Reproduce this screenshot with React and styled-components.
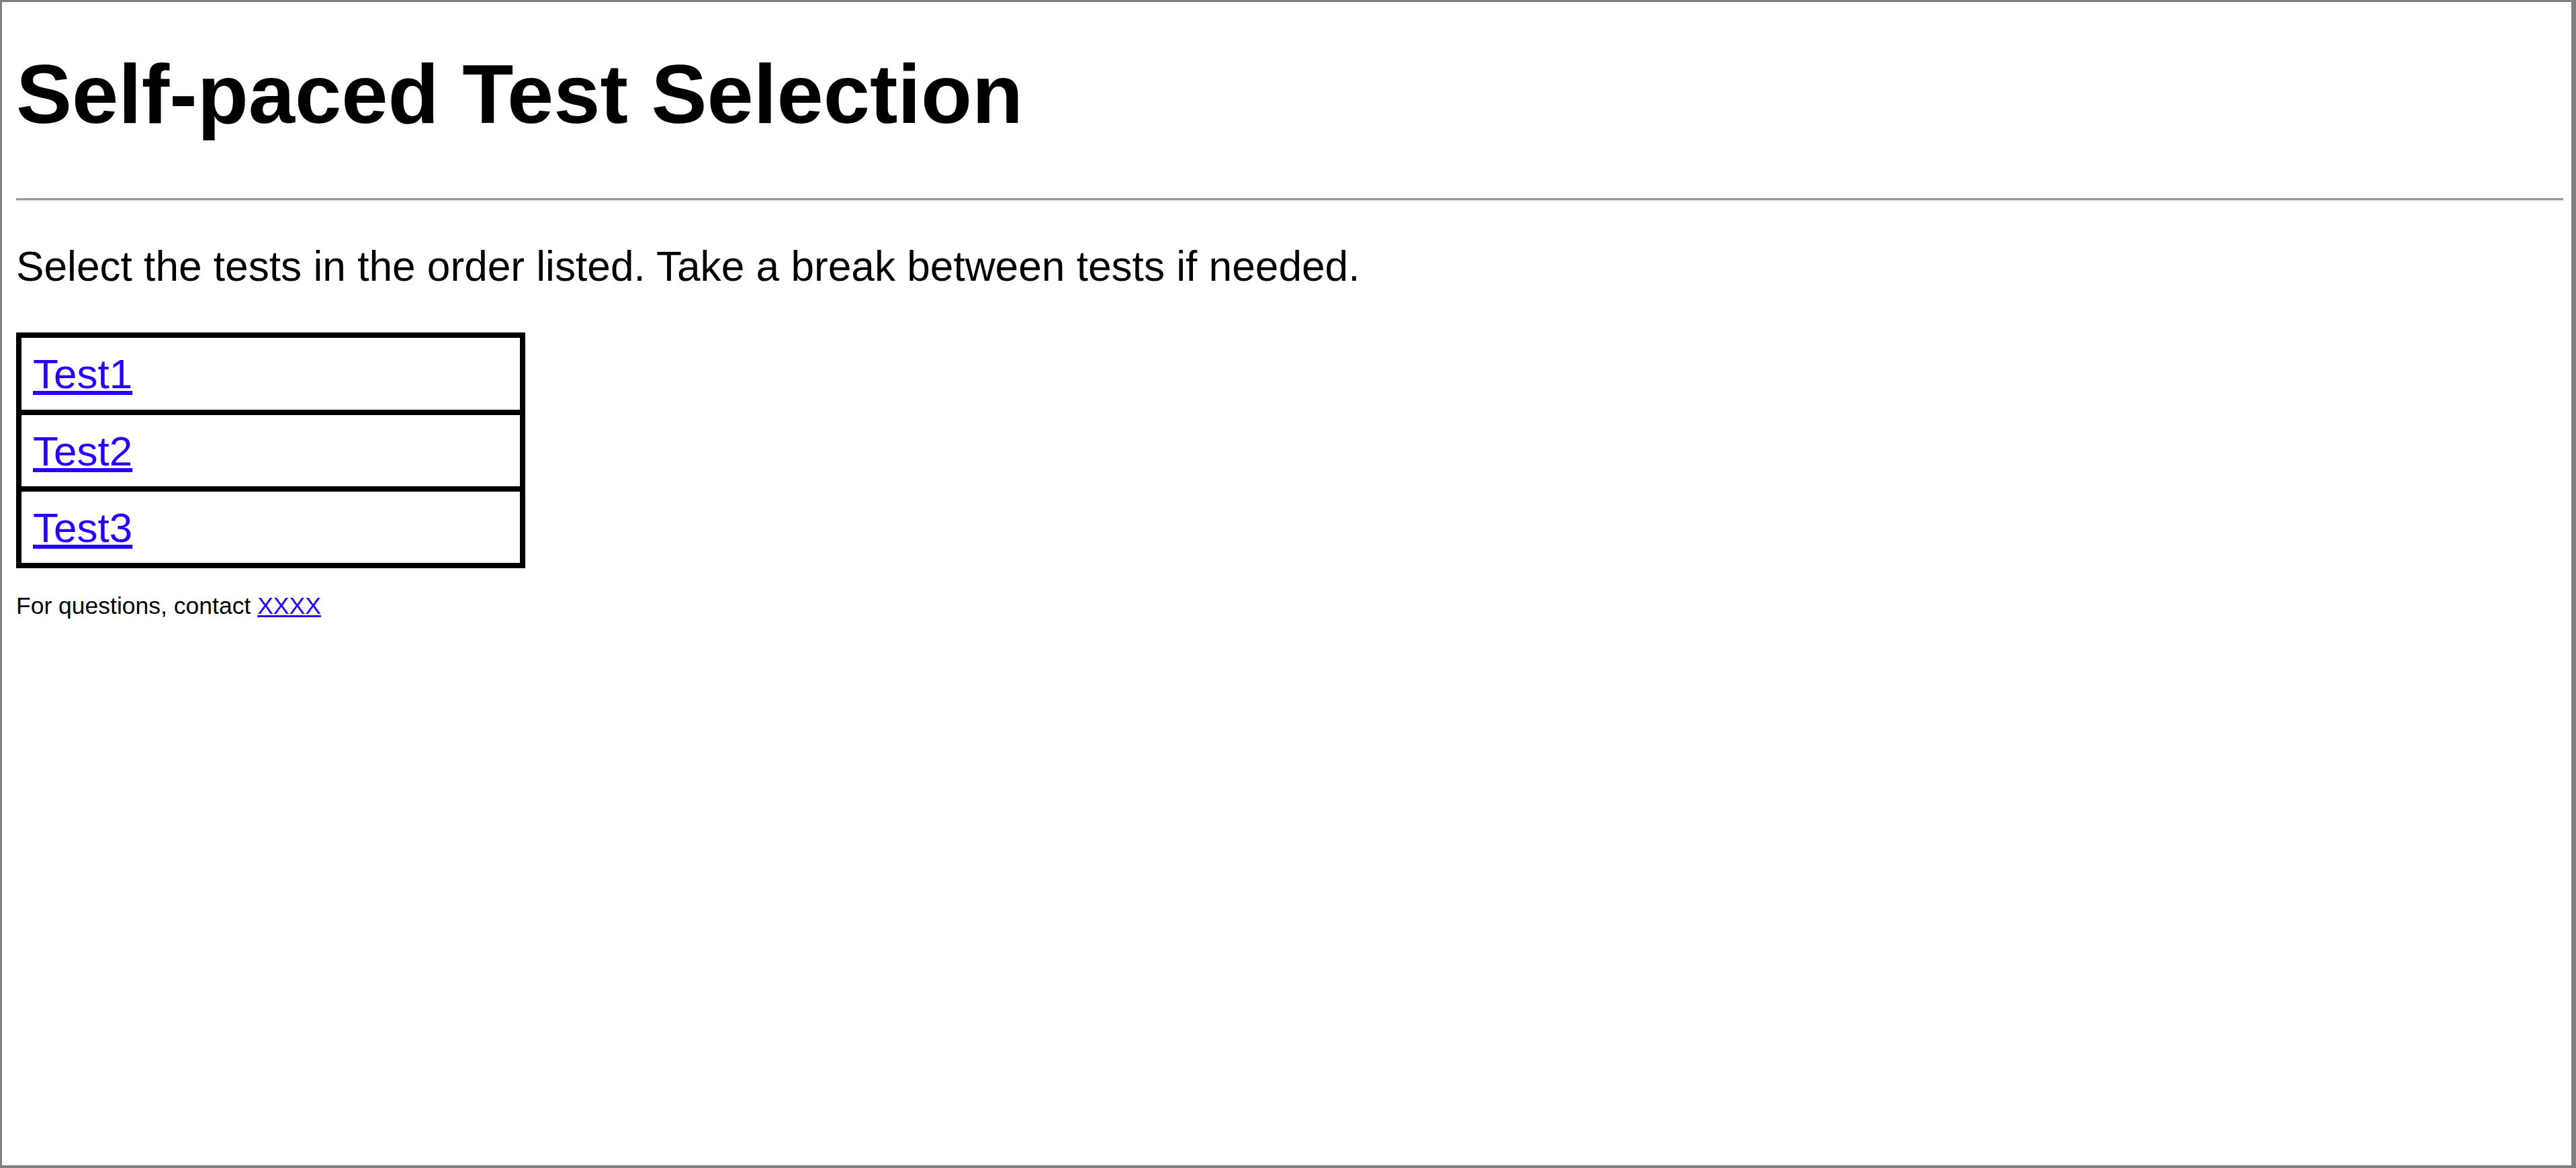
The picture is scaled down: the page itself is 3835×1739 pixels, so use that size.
import React from "react";
import styled, { createGlobalStyle } from "styled-components";

const GlobalStyle = createGlobalStyle`
  html, body {
    margin: 0;
    padding: 0;
    background: #ffffff;
  }
  body {
    font-family: "Liberation Sans", Arial, sans-serif;
    color: #000000;
  }
`;

const Frame = styled.div`
  box-sizing: border-box;
  width: 100vw;
  height: 100vh;
  border-style: solid;
  border-color: #808080;
  border-width: 3px 7px 4px 3px;
  padding: 66px 12px 0 21px;
  overflow: hidden;
`;

const Title = styled.h1`
  margin: 0;
  font-size: 124.5px;
  line-height: 142px;
  font-weight: 700;
`;

const Rule = styled.hr`
  margin: 84px 0 0 0;
  height: 0;
  border: none;
  border-top: 3px solid #9a9a9a;
  border-bottom: 2px solid #eeeeee;
`;

const Intro = styled.p`
  margin: 61px 0 0 0;
  font-size: 62.2px;
  line-height: 71px;
  white-space: nowrap;
`;

const TestList = styled.div`
  margin-top: 63px;
  width: 758px;
  box-sizing: border-box;
  border: 8px solid #000000;
  display: flex;
  flex-direction: column;
`;

const TestRow = styled.div`
  box-sizing: border-box;
  height: ${(p) => (p.$first ? "107px" : "114px")};
  padding: 18px 17px 0 17px;
  border-top: ${(p) => (p.$first ? "none" : "8px solid #000000")};
  font-size: 62px;
  line-height: 71px;
`;

const TestLink = styled.a`
  color: #2600ff;
  text-decoration: underline;
  text-decoration-thickness: 6px;
  text-underline-offset: 4px;
`;

const Footer = styled.div`
  margin-top: 36px;
  font-size: 35.5px;
  line-height: 40px;
`;

const ContactLink = styled.a`
  color: #2600ff;
  text-decoration: underline;
  text-decoration-thickness: 3px;
  text-underline-offset: 2px;
`;

const tests = ["Test1", "Test2", "Test3"];

export default function App() {
  return (
    <>
      <GlobalStyle />
      <Frame>
        <Title>Self-paced Test Selection</Title>
        <Rule />
        <Intro>
          Select the tests in the order listed. Take a break between tests if needed.
        </Intro>
        <TestList>
          {tests.map((t, i) => (
            <TestRow key={t} $first={i === 0}>
              <TestLink href="#">{t}</TestLink>
            </TestRow>
          ))}
        </TestList>
        <Footer>
          For questions, contact <ContactLink href="#">XXXX</ContactLink>
        </Footer>
      </Frame>
    </>
  );
}
